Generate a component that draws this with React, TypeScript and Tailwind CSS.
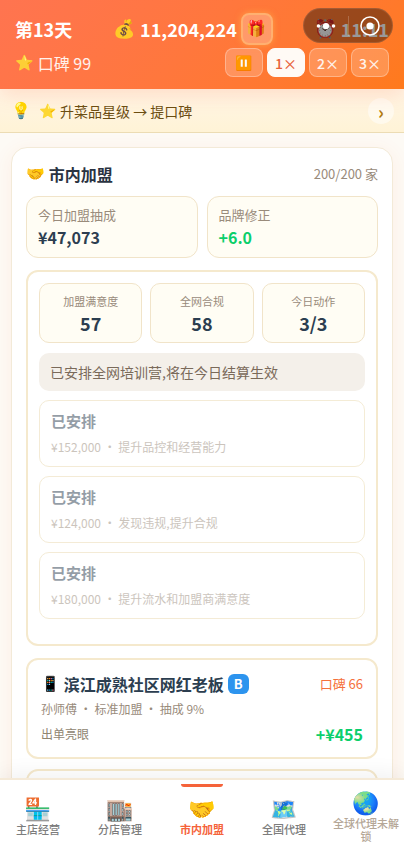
import { ReactNode, useState } from "react";

const speeds = ["1×", "2×", "3×"];

const metrics = [
    { label: "加盟满意度", value: "57" },
    { label: "全网合规", value: "58" },
    { label: "今日动作", value: "3/3" },
];

const actions = [
    { cost: "¥152,000", effect: "提升品控和经营能力" },
    { cost: "¥124,000", effect: "发现违规,提升合规" },
    { cost: "¥180,000", effect: "提升流水和加盟商满意度" },
];

const tabs = [
    { icon: "🏪", label: "主店经营" },
    { icon: "🏬", label: "分店管理" },
    { icon: "🤝", label: "市内加盟" },
    { icon: "🗺️", label: "全国代理" },
    { icon: "🌏", label: "全球代理未解锁", locked: true },
];

const Emoji = ({ children, className = "" }: { children: ReactNode; className?: string }) => (
    <span className={`font-['Noto_Color_Emoji',sans-serif] ${className}`}>{children}</span>
);

const CapsuleMenu = () => (
    <div className="absolute top-2 right-[11px] flex h-[35px] w-[90px] items-center rounded-full border border-white/10 bg-black/40">
        <button className="flex flex-1 justify-center" aria-label="更多">
            <svg width="20" height="8" viewBox="0 0 20 8" fill="white">
                <circle cx="2.5" cy="4" r="1.8" />
                <circle cx="10" cy="4" r="3.1" />
                <circle cx="17.5" cy="4" r="1.8" />
            </svg>
        </button>
        <span className="h-5 w-px bg-white/20" />
        <button className="flex flex-1 justify-center" aria-label="关闭">
            <svg width="20" height="20" viewBox="0 0 20 20" fill="none">
                <circle cx="10" cy="10" r="9" stroke="white" strokeWidth="1.6" />
                <circle cx="10" cy="10" r="3.6" fill="white" />
            </svg>
        </button>
    </div>
);

const Header = () => {
    const [speed, setSpeed] = useState("1×");

    return (
        <header className="relative z-10 bg-linear-135 from-[#ff7450] to-[#ff7a1c] px-[15px] pt-[13px] pb-3 text-white shadow-[0_4px_20px_rgba(255,107,53,0.2)]">
            <div className="flex items-center justify-between">
                <span className="text-lg leading-6 font-bold">第13天</span>
                <div className="flex items-center gap-1">
                    <span className="flex items-center gap-1 text-lg leading-6 font-bold">
                        <Emoji>💰</Emoji>
                        11,204,224
                    </span>
                    <button
                        aria-label="礼物"
                        className="flex size-8 items-center justify-center rounded-lg border-2 border-[#ffb070] bg-white/25 text-base shadow-[0_0_6px_rgba(255,200,80,0.5)]"
                    >
                        <Emoji>🎁</Emoji>
                    </button>
                </div>
                <span className="flex items-center gap-1 text-lg leading-6 font-bold">
                    <Emoji>⏰</Emoji>
                    11:11
                </span>
            </div>

            <div className="mt-[3px] flex items-center justify-between">
                <span className="flex items-center gap-1 text-base leading-6 text-white/90">
                    <Emoji className="text-[15px]">⭐</Emoji>
                    口碑 99
                </span>
                <div className="flex gap-1">
                    <button
                        aria-label="暂停"
                        className="flex h-[29px] w-[38px] items-center justify-center rounded-lg border border-white/30 bg-white/20 text-sm"
                    >
                        <Emoji>⏸️</Emoji>
                    </button>
                    {speeds.map((item) => (
                        <button
                            key={item}
                            onClick={() => setSpeed(item)}
                            className={`h-[29px] w-[38px] rounded-lg border text-sm leading-5 font-medium ${
                                item === speed
                                    ? "border-[#fffaf5] bg-[#fffaf5] text-[#e8623a]"
                                    : "border-white/30 bg-white/20 text-white/90"
                            }`}
                        >
                            {item}
                        </button>
                    ))}
                </div>
            </div>

            <CapsuleMenu />
        </header>
    );
};

const TipBar = () => (
    <div className="flex h-11 shrink-0 items-center border-b border-[#ecdcb4] bg-linear-to-b from-[#fff5e6] to-[#fff3d6] pr-[10px] pl-[11px] text-[#6b4e12]">
        <Emoji className="w-7 text-base">💡</Emoji>
        <Emoji className="w-[21px] text-sm">⭐</Emoji>
        <span className="flex-1 text-sm">升菜品星级 → 提口碑</span>
        <button
            aria-label="查看"
            className="size-[26px] rounded-full bg-white/50 text-lg leading-6 font-bold text-[#b07a10]"
        >
            ›
        </button>
    </div>
);

const StatCard = ({ label, value, positive }: { label: string; value: string; positive?: boolean }) => (
    <div className="flex-1 rounded-xl border border-[#f1e4c9] bg-[#fffdf4] px-[11px] py-2">
        <p className="text-[13px] leading-5 text-[#998b7b]">{label}</p>
        <p className={`text-base leading-6 font-bold ${positive ? "text-[#0bcf6b]" : "text-[#2c3e50]"}`}>
            {value}
        </p>
    </div>
);

const ActionPanel = () => (
    <section className="mt-3 rounded-xl border-2 border-[#f5e9cd] px-[11px] pt-[11px] pb-[25px]">
        <div className="flex gap-2">
            {metrics.map((metric) => (
                <div
                    key={metric.label}
                    className="flex-1 rounded-[10px] border border-[#f1e4c9] bg-[#fffdf4] py-[7px] text-center"
                >
                    <p className="text-[11px] leading-5 text-[#998b7b]">{metric.label}</p>
                    <p className="text-lg leading-6 font-bold text-[#2c3e50]">{metric.value}</p>
                </div>
            ))}
        </div>

        <p className="mt-[10px] rounded-[10px] bg-[#f4f0ea] px-[11px] py-[9px] text-sm leading-5 text-[#7a6a5a]">
            已安排全网培训营,将在今日结算生效
        </p>

        {actions.map((action) => (
            <button
                key={action.cost}
                disabled
                className="mt-[9px] block w-full rounded-[10px] border border-[#ead9ae] px-[11px] py-2 text-left opacity-50"
            >
                <span className="block text-[15px] leading-6 font-bold text-[#2c3e50]">已安排</span>
                <span className="mt-[3px] block text-xs leading-[22px] text-[#998b7b]">
                    {action.cost} ・ {action.effect}
                </span>
            </button>
        ))}
    </section>
);

const FranchiseCard = () => (
    <article className="mt-3 rounded-xl border-2 border-[#f5e9cd] px-[13px] pt-3 pb-[11px]">
        <div className="flex items-center justify-between">
            <h3 className="flex items-center gap-1 text-base leading-6 font-bold text-[#2c3e50]">
                <Emoji className="text-[15px]">📱</Emoji>
                滨江成熟社区网红老板
                <span className="rounded-md bg-[#2d94ee] px-[6px] text-[13px] leading-5 text-white">B</span>
            </h3>
            <span className="text-[13px] text-[#f5713c]">口碑 66</span>
        </div>
        <p className="text-xs leading-[26px] text-[#998b7b]">孙师傅 ・ 标准加盟 ・ 抽成 9%</p>
        <div className="flex items-center justify-between">
            <span className="text-xs text-[#8f8672]">出单亮眼</span>
            <span className="text-base leading-6 font-bold text-[#0bcf6b]">+¥455</span>
        </div>
    </article>
);

const TabBar = () => (
    <nav className="relative z-10 flex h-[74px] shrink-0 justify-between border-t-2 border-[#f5ead8] bg-white px-1 shadow-[0_-4px_20px_rgba(0,0,0,0.06)]">
        {tabs.map((tab) => {
            const active = tab.label === "市内加盟";

            return (
                <button
                    key={tab.label}
                    className={`relative flex w-[68px] flex-col items-center justify-center pt-px text-[11px] leading-[13px] ${
                        active ? "font-bold text-[#f5633a]" : tab.locked ? "font-medium text-[#b5a797]" : "font-medium text-[#7d7d7d]"
                    }`}
                >
                    {active && <span className="absolute top-1 h-[3px] w-[42px] rounded-b bg-[#f5633a]" />}
                    <Emoji className="text-[22px] leading-[26px]">{tab.icon}</Emoji>
                    {tab.label}
                </button>
            );
        })}
    </nav>
);

export default function App() {
    return (
        <div className="flex h-screen flex-col bg-[#fdfaf5] font-['Noto_Sans_CJK_SC',sans-serif]">
            <Header />
            <TipBar />

            <main className="min-h-0 flex-1 overflow-y-auto px-[11px] pt-[14px] [scrollbar-width:none]">
                <div className="rounded-2xl border border-[#f3ead8] bg-white p-[14px] shadow-[0_4px_20px_rgba(255,107,53,0.08)]">
                    <div className="flex items-center justify-between">
                        <h2 className="flex items-center gap-1 text-base leading-6 font-bold text-[#2a3342]">
                            <Emoji className="text-[15px]">🤝</Emoji>
                            市内加盟
                        </h2>
                        <span className="text-[13px] text-[#998b7b]">200/200 家</span>
                    </div>

                    <div className="mt-[10px] flex gap-[9px]">
                        <StatCard label="今日加盟抽成" value="¥47,073" />
                        <StatCard label="品牌修正" value="+6.0" positive />
                    </div>

                    <ActionPanel />
                    <FranchiseCard />

                    {/* next franchise, still loading */}
                    <div className="mt-[10px] h-24 rounded-xl border-2 border-[#f5e9cd]" />
                </div>
            </main>

            <TabBar />
        </div>
    );
}
